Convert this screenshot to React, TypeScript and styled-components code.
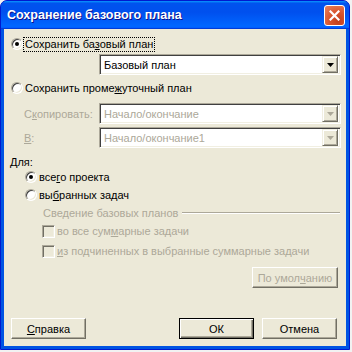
import React from 'react';
import styled, { createGlobalStyle } from 'styled-components';

const GlobalStyle = createGlobalStyle`
  html, body {
    margin: 0;
    padding: 0;
    background: #f2f2f2;
  }
  body {
    font-family: "Liberation Sans", Tahoma, sans-serif;
    font-size: 11px;
  }
`;

const Window = styled.div`
  width: 350px;
  height: 350px;
  box-sizing: border-box;
  border: 1px solid #0019cf;
  border-radius: 7px 7px 0 0;
  overflow: hidden;
  display: flex;
  flex-direction: column;
  background: #0054e3;
`;

const TitleBar = styled.div`
  height: 28px;
  flex-shrink: 0;
  display: flex;
  align-items: center;
  justify-content: space-between;
  padding: 0 4px 0 6px;
  background: linear-gradient(
    180deg,
    #0997ff,
    #0053ee 8%,
    #0050ee 40%,
    #06f 88%,
    #06f 93%,
    #005bff 95%,
    #003dd7 96%,
    #003dd7
  );
`;

const Title = styled.span`
  font-family: "Liberation Sans", Arial, sans-serif;
  font-weight: bold;
  font-size: 12.5px;
  color: #fff;
  text-shadow: 1px 1px 0 #0f1089;
`;

const CloseButton = styled.div`
  width: 21px;
  height: 21px;
  box-sizing: border-box;
  border: 1px solid #fff;
  border-radius: 3px;
  background: radial-gradient(circle at 70% 80%, #c13f1c 0%, #d9552e 45%, #e8835f 100%);
  display: flex;
  align-items: center;
  justify-content: center;
`;

const Client = styled.div`
  flex: 1;
  border: 3px solid #0054e3;
  border-top: 0;
  background: #ece9d8;
  display: flex;
  flex-direction: column;
  padding: 0 5px 7px 0;
  color: #000;
`;

const Row = styled.div<{ $top: number; $left: number; $h?: number }>`
  display: flex;
  align-items: center;
  margin-top: ${(p) => p.$top}px;
  padding-left: ${(p) => p.$left}px;
  height: ${(p) => p.$h ?? 14}px;
  flex-shrink: 0;
`;

const RadioCircle = styled.span<{ $checked?: boolean }>`
  position: relative;
  width: 12px;
  height: 12px;
  box-sizing: border-box;
  flex-shrink: 0;
  border-radius: 50%;
  background: #fff;
  border: 1px solid;
  border-color: #aca899 #fff #fff #aca899;
  box-shadow: inset 1px 1px 0 #404040, inset -1px -1px 0 #ece9d8;
  &::after {
    content: '';
    display: ${(p) => (p.$checked ? 'block' : 'none')};
    position: absolute;
    left: 3px;
    top: 3px;
    width: 4px;
    height: 4px;
    border-radius: 50%;
    background: #000;
  }
`;

const CheckBox = styled.span`
  width: 13px;
  height: 13px;
  box-sizing: border-box;
  flex-shrink: 0;
  border: 1px solid;
  border-color: #aca899 #fff #fff #aca899;
  box-shadow: inset 1px 1px 0 #716f64, inset -1px -1px 0 #f1efe2;
  background: #ece9d8;
`;

const Label = styled.span<{ $focused?: boolean; $disabled?: boolean }>`
  padding: 0 2px;
  line-height: 15px;
  white-space: nowrap;
  color: ${(p) => (p.$disabled ? '#aca899' : '#000')};
  outline: ${(p) => (p.$focused ? '1px dotted #000' : 'none')};
  outline-offset: -1px;
`;

const FieldLabel = styled.span`
  width: 75px;
  color: #aca899;
  white-space: nowrap;
`;

const Key = styled.u`
  text-decoration: underline;
  text-underline-offset: 1px;
`;

const Combo = styled.div<{ $disabled?: boolean }>`
  width: 242px;
  height: 21px;
  box-sizing: border-box;
  border: 1px solid;
  border-color: #aca899 #fff #fff #aca899;
  box-shadow: inset 1px 1px 0 #404040, inset -1px -1px 0 #f1efe2;
  background: #fff;
  display: flex;
  align-items: center;
  padding: 2px 2px 2px 4px;
  color: ${(p) => (p.$disabled ? '#aca899' : '#000')};
`;

const ComboText = styled.span`
  flex: 1;
`;

const ArrowButton = styled.span`
  width: 16px;
  height: 17px;
  box-sizing: border-box;
  background: #ece9d8;
  border: 1px solid;
  border-color: #f1efe2 #716f64 #716f64 #f1efe2;
  box-shadow: inset 1px 1px 0 #fff, inset -1px -1px 0 #aca899;
  display: flex;
  align-items: center;
  justify-content: center;
`;

const GroupCaption = styled.div<{ $top: number }>`
  display: flex;
  align-items: center;
  margin-top: ${(p) => p.$top}px;
  padding-left: 39px;
  height: 14px;
  color: #aca899;
`;

const EtchedLine = styled.span`
  flex: 1;
  margin: 0 1px 0 4px;
  height: 0;
  border-top: 1px solid #aca899;
  border-bottom: 1px solid #fff;
`;

const ButtonRow = styled.div<{ $top?: number }>`
  display: flex;
  align-items: center;
  margin-top: ${(p) => (p.$top === undefined ? 'auto' : `${p.$top}px`)};
  flex-shrink: 0;
`;

const Button = styled.div<{ $width?: number; $default?: boolean; $disabled?: boolean }>`
  width: ${(p) => p.$width ?? 75}px;
  height: 21px;
  box-sizing: border-box;
  display: flex;
  align-items: center;
  justify-content: center;
  background: #ece9d8;
  color: ${(p) => (p.$disabled ? '#aca899' : '#000')};
  border: 1px solid;
  border-color: ${(p) => (p.$default ? '#000' : '#fff #716f64 #716f64 #fff')};
  box-shadow: ${(p) =>
    p.$default
      ? 'inset 1px 1px 0 #fff, inset -1px -1px 0 #716f64, inset -2px -2px 0 #aca899'
      : 'inset -1px -1px 0 #aca899'};
`;

const Spacer = styled.span`
  flex: 1;
`;

const Gap = styled.span<{ $w: number }>`
  width: ${(p) => p.$w}px;
  flex-shrink: 0;
`;

function Arrow({ disabled }: { disabled?: boolean }) {
  return (
    <svg width="7" height="4" viewBox="0 0 7 4">
      <path d="M0 0h7L3.5 4z" fill={disabled ? '#aca899' : '#000'} />
    </svg>
  );
}

function Radio({ checked }: { checked?: boolean }) {
  return <RadioCircle $checked={checked} />;
}

export default function App() {
  return (
    <>
      <GlobalStyle />
      <Window>
        <TitleBar>
          <Title>Сохранение базового плана</Title>
          <CloseButton>
            <svg width="11" height="11" viewBox="0 0 11 11">
              <path d="M1.5 1.5l8 8M9.5 1.5l-8 8" stroke="#fff" strokeWidth="2.2" strokeLinecap="square" />
            </svg>
          </CloseButton>
        </TitleBar>
        <Client>
          <Row $top={7} $left={7} $h={16}>
            <Radio checked />
            <Label $focused>
              Сохранить ба<Key>з</Key>овый план
            </Label>
          </Row>
          <Row $top={2} $left={95} $h={21}>
            <Combo>
              <ComboText>Базовый план</ComboText>
              <ArrowButton>
                <Arrow />
              </ArrowButton>
            </Combo>
          </Row>
          <Row $top={5} $left={7} $h={16}>
            <Radio />
            <Label>
              Сохранить проме<Key>ж</Key>уточный план
            </Label>
          </Row>
          <Row $top={7} $left={20} $h={21}>
            <FieldLabel>
              С<Key>к</Key>опировать:
            </FieldLabel>
            <Combo $disabled>
              <ComboText>Начало/окончание</ComboText>
              <ArrowButton>
                <Arrow disabled />
              </ArrowButton>
            </Combo>
          </Row>
          <Row $top={3} $left={20} $h={21}>
            <FieldLabel>
              <Key>В</Key>:
            </FieldLabel>
            <Combo $disabled>
              <ComboText>Начало/окончание1</ComboText>
              <ArrowButton>
                <Arrow disabled />
              </ArrowButton>
            </Combo>
          </Row>
          <Row $top={7} $left={6}>
            Для:
          </Row>
          <Row $top={1} $left={21}>
            <Radio checked />
            <Label>
              все<Key>г</Key>о проекта
            </Label>
          </Row>
          <Row $top={4} $left={21}>
            <Radio />
            <Label>
              вы<Key>б</Key>ранных задач
            </Label>
          </Row>
          <GroupCaption $top={4}>
            Сведение базовых планов
            <EtchedLine />
          </GroupCaption>
          <Row $top={4} $left={38}>
            <CheckBox />
            <Label $disabled>
              во все сум<Key>м</Key>арные задачи
            </Label>
          </Row>
          <Row $top={6} $left={38}>
            <CheckBox />
            <Label $disabled>
              <Key>и</Key>з подчиненных в выбранные суммарные задачи
            </Label>
          </Row>
          <ButtonRow $top={9}>
            <Spacer />
            <Button $width={86} $disabled>
              По умол<Key>ч</Key>анию
            </Button>
            <Gap $w={3} />
          </ButtonRow>
          <ButtonRow>
            <Gap $w={7} />
            <Button>
              <Key>С</Key>правка
            </Button>
            <Spacer />
            <Button $default>ОК</Button>
            <Gap $w={8} />
            <Button>Отмена</Button>
            <Gap $w={4} />
          </ButtonRow>
        </Client>
      </Window>
    </>
  );
}
